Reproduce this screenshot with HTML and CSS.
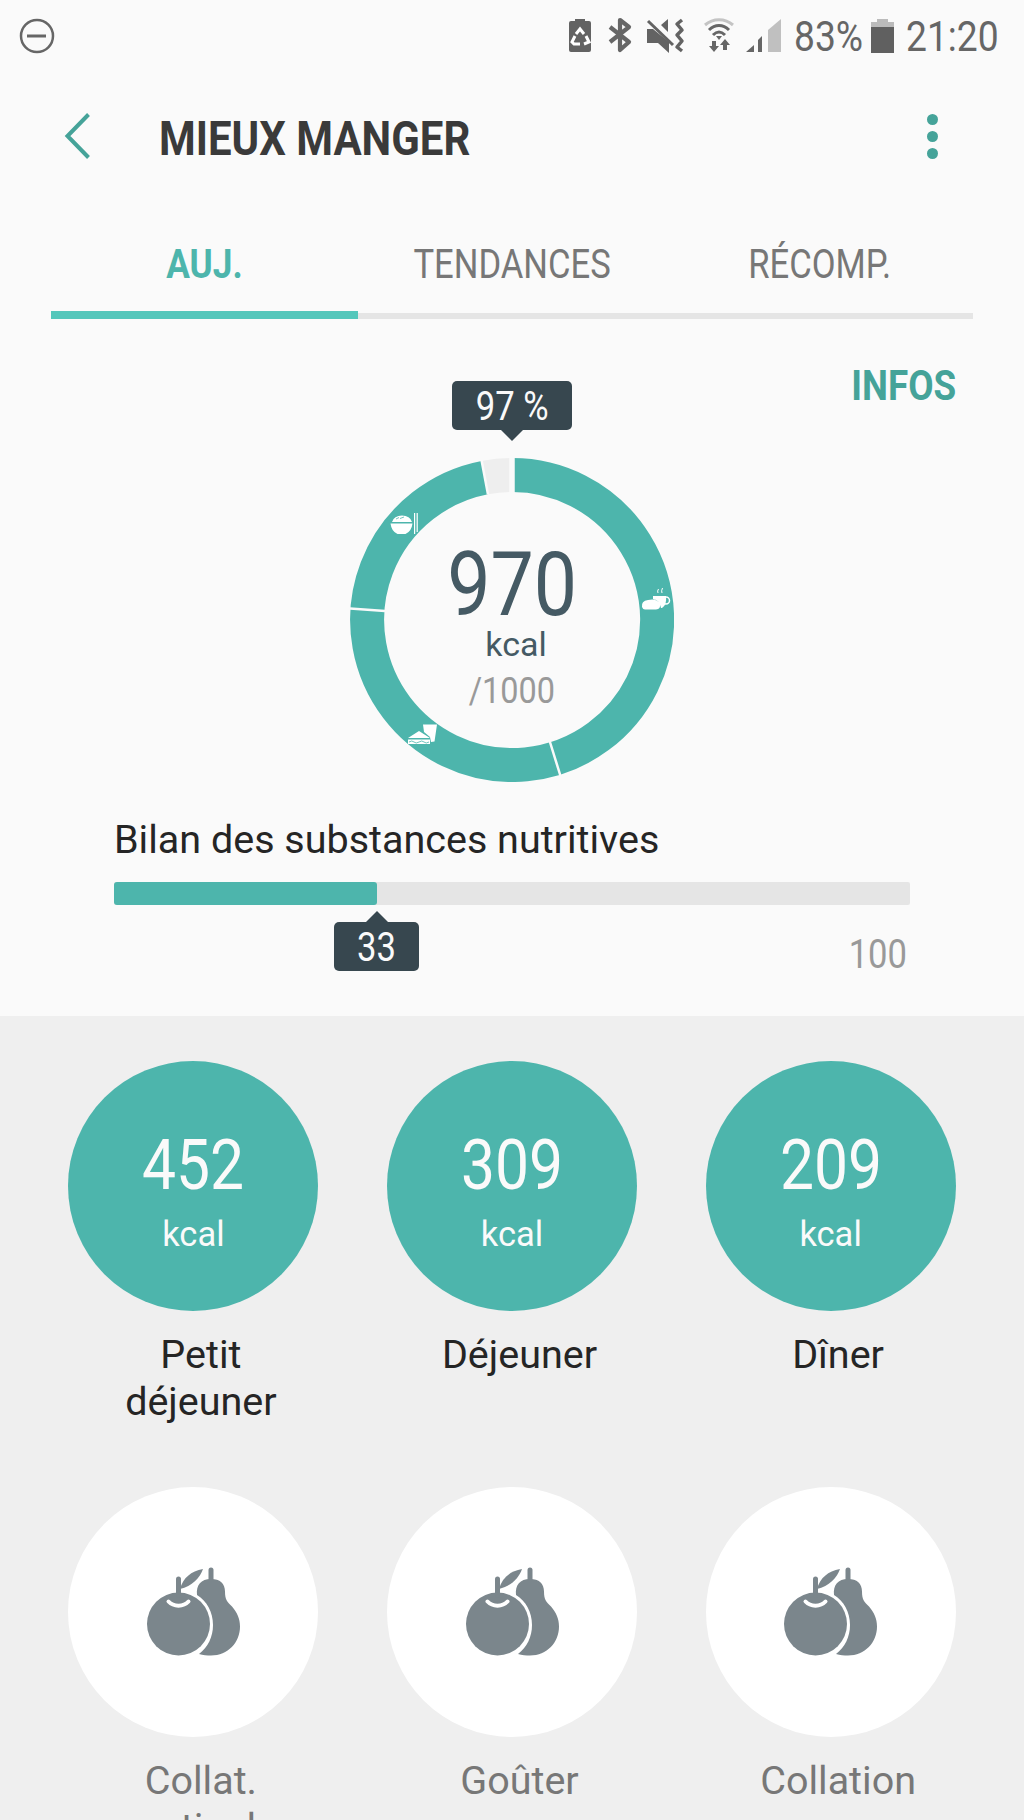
FILE: index.html
```html
<!DOCTYPE html>
<html lang="fr">
  <head>
    <meta charset="utf-8">
    <title>Mieux manger</title>
    <link rel="stylesheet" href="styles.css">
  </head>
  <body>
    <!-- reusable icon for the snack circles -->
    <svg class="defs" width="0" height="0">
      <symbol id="fruits" viewBox="0 0 96 90">
        <path d="M66 4v12" stroke="#7b868c" stroke-width="5" stroke-linecap="round"/>
        <path d="M66 13c-10 0-15 6-14 16 10 6 16 17 16 30 0 12-5 22-14 29 4 1.500 8 1.500 12 1.500 17 0 29-13 29-29 0-8-3-14-8-20-5-5-7-7-7-15 0-8-5-12.500-14-12.500z" fill="#7b868c"/>
        <circle cx="33.500" cy="58" r="31.500" fill="#7b868c"/>
        <path d="M33.500 13v16" stroke="#7b868c" stroke-width="5" stroke-linecap="round"/>
        <path d="M35 23C38 12 46 5 58 3 55 12 47 20 35 23z" fill="#7b868c"/>
        <path d="M23.500 35.500c5 5.500 15 5.500 20 0" fill="none" stroke="#fff" stroke-width="4" stroke-linecap="round"/>
      </symbol>
    </svg>

    <div class="status-bar">
      <svg class="dnd" width="36" height="36" viewBox="0 0 36 36" fill="none" stroke="#666">
        <circle cx="18" cy="18" r="16" stroke-width="2.500"/>
        <path d="M8 18h19" stroke-width="3"/>
      </svg>
      <svg class="status-icons" width="214" height="40" viewBox="0 0 214 40">
        <!-- power saving -->
        <path d="M1 7q0-2 2-2h4V3h10v2h4q2 0 2 2v27q0 2-2 2H3q-2 0-2-2z" fill="#636363"/>
        <g fill="none" stroke="#fff" stroke-width="3">
          <path d="M8 18l4-5 4 5M18 20l3 6-5 2M12 28H6l-2-2 3-6"/>
        </g>
        <!-- bluetooth -->
        <path d="M42 11l19 15-9 8V4l9 7-19 15" fill="none" stroke="#666" stroke-width="4.200" stroke-linejoin="round"/>
        <!-- muted, vibrating -->
        <path d="M79 13h6l16 13v11l-11-10H79zM93 9l7-6v13z" fill="#636363"/>
        <path d="M80 5l25 24" stroke="#636363" stroke-width="3"/>
        <path d="M114 4l-5 4 5 6-5 5 5 6-5 6 5 4" fill="none" stroke="#636363" stroke-width="3.500" stroke-linejoin="round"/>
        <!-- wifi -->
        <g fill="none" stroke="#666" stroke-width="3">
          <path d="M137 9c8-7 20-7 28 0" stroke="#c4c4c4"/>
          <path d="M141 14c6-6 14-6 20 0"/>
          <path d="M145 19c4-4 8-4 12 0"/>
        </g>
        <path d="M148 20h6l-3 4z" fill="#666"/>
        <path d="M144 25h4v5h3l-5 6-5-6h3zM155 34h4v-5h3l-5-6-5 6h3z" fill="#666"/>
        <!-- signal -->
        <path d="M178 36l8-7v7zM190 24l4-4v16h-4z" fill="#666"/>
        <path d="M200 14l13-11v33h-13z" fill="#c0c0c0"/>
      </svg>
      <span class="status-text battery-level">83%</span>
      <svg class="battery" width="23" height="36" viewBox="0 0 23 36">
        <path d="M0 4h6V1h11v3h6v5H0z" fill="#bbb"/>
        <path d="M0 9h23v26H0z" fill="#606060"/>
      </svg>
      <span class="status-text clock">21:20</span>
    </div>

    <div class="header">
      <svg class="back" width="26" height="46" viewBox="0 0 26 46">
        <path d="M24.500 1.500L3.500 23l21 21.500" fill="none" stroke="#45a399" stroke-width="4"/>
      </svg>
      <h1 class="title">MIEUX MANGER</h1>
      <div class="menu">
        <i></i><i></i><i></i>
      </div>
    </div>

    <div class="tabs">
      <div class="tab active"><span>AUJ.</span></div>
      <div class="tab"><span>TENDANCES</span></div>
      <div class="tab"><span>RÉCOMP.</span></div>
    </div>

    <div class="summary">
      <div class="summary-top">
        <div class="chart">
          <div class="tip tip-down"><span>97 %</span></div>
          <div class="ring">
            <svg class="ring-svg" width="324" height="324" viewBox="0 0 324 324">
              <path d="M162 17A145 145 0 1 1 134.800 19.600" fill="none" stroke="#4db5ac" stroke-width="34"/>
              <path d="M134.800 19.600A145 145 0 0 1 162 17" fill="none" stroke="#eee" stroke-width="34"/>
              <g stroke="#fafafa" stroke-width="2.500">
                <path d="M199.800 283.500L210.500 318M35 153L0 150.500M138 36.500L131.500 2"/>
                <path d="M162 0v36" stroke-width="5.500"/>
              </g>
              <!-- breakfast -->
              <g fill="#fff">
                <path d="M292 149q-1-6 6-7 9-2 12 4 1 5-4 5.500h-11q-2 0-3-2.500zM303 138h13q1 9-4 12h-1q-1-8-8-9z"/>
                <circle cx="316" cy="142.500" r="3.500" fill="none" stroke="#fff" stroke-width="1.500"/>
                <path d="M308 135q-1-2 .5-4M312 135q-1-2 .5-5" fill="none" stroke="#fff"/>
              </g>
              <!-- lunch -->
              <g fill="#fff">
                <path d="M73 266.500h14l-2.500 17-3.500.5-1-5-6-5zM58 280l11-7 11 7z"/>
                <path d="M58 281.500h22v4.500H58z"/>
                <path d="M59 284q3-2 5 0t5 0 5 0 5 0" fill="none" stroke="#4db5ac" stroke-width=".8"/>
              </g>
              <!-- dinner -->
              <g fill="#fff">
                <path d="M42 64q2-6.500 10-6.500T62 64zM40.500 65.500h22q-1 8-7 10.500h-8q-6-2.500-7-10.500z"/>
                <path d="M64 55h1.200v21H64zM66.600 55h1.200v19h-1.200z"/>
                <path d="M46 61l3-1.500M50 60.500l4-1.500" stroke="#4db5ac" stroke-width=".8"/>
              </g>
            </svg>
            <div class="ring-text">
              <div class="total">970</div>
              <div class="total-unit">kcal</div>
              <div class="goal">/1000</div>
            </div>
          </div>
        </div>
        <div class="infos"><span>INFOS</span></div>
      </div>

      <div class="nutrients">
        <h2 class="nutrients-title">Bilan des substances nutritives</h2>
        <div class="bar"><div class="bar-fill" style="width: 33%"></div></div>
        <div class="bar-legend">
          <div class="tip tip-up"><span>33</span></div>
          <span class="bar-max">100</span>
        </div>
      </div>
    </div>

    <div class="meals">
      <div class="meal">
        <div class="circle"><div class="kcal">452</div><div class="unit">kcal</div></div>
        <div class="meal-name">Petit<br>déjeuner</div>
      </div>
      <div class="meal">
        <div class="circle"><div class="kcal">309</div><div class="unit">kcal</div></div>
        <div class="meal-name">Déjeuner</div>
      </div>
      <div class="meal">
        <div class="circle"><div class="kcal">209</div><div class="unit">kcal</div></div>
        <div class="meal-name">Dîner</div>
      </div>
      <div class="meal empty">
        <div class="circle"><svg class="fruits"><use href="#fruits"/></svg></div>
        <div class="meal-name">Collat.<br>matinale</div>
      </div>
      <div class="meal empty">
        <div class="circle"><svg class="fruits"><use href="#fruits"/></svg></div>
        <div class="meal-name">Goûter</div>
      </div>
      <div class="meal empty">
        <div class="circle"><svg class="fruits"><use href="#fruits"/></svg></div>
        <div class="meal-name">Collation</div>
      </div>
    </div>
  </body>
</html>
```
FILE: styles.css
```css
* {
  box-sizing: border-box;
}

body {
  margin: 0;
  height: 1820px;
  overflow: hidden;
  background: #fafafa;
  font-family: Roboto, sans-serif;
  color: #252525;
}

svg {
  display: block;
}

svg.defs {
  position: absolute;
}

/* narrow lettering */
.status-text,
.title,
.tab span,
.infos span,
.tip span,
.total,
.goal,
.bar-max,
.kcal {
  display: inline-block;
  white-space: nowrap;
  transform: scaleX(0.865);
}

.status-bar {
  display: flex;
  align-items: center;
  height: 72px;
  padding-left: 19px;
}

.status-icons {
  margin-left: 513px;
}

.status-text {
  font-size: 43px;
  line-height: 73px;
  color: #666;
  transform-origin: left;
}

.battery-level {
  width: 78px;
  margin-left: 12px;
}

.battery {
  margin-left: -1px;
}

.clock {
  margin-left: 12px;
}

.header {
  display: flex;
  align-items: center;
  height: 132px;
  padding: 0 86px 0 64px;
}

.back {
  margin-bottom: 4px;
}

.title {
  margin: 0 auto 0 69px;
  font-size: 48.5px;
  font-weight: 700;
  color: #3a3a3a;
  transform-origin: left;
}

.menu i {
  display: block;
  width: 11px;
  height: 11px;
  margin: 0 0 6.300px;
  border-radius: 50%;
  background: #45a399;
}

.menu i:last-child {
  margin-bottom: 3px;
}

.tabs {
  display: flex;
  align-items: flex-end;
  height: 115px;
  margin: 0 51px;
}

.tab {
  flex: 1;
  height: 115px;
  border-bottom: 6px solid #e5e5e5;
  font-size: 40px;
  line-height: 121px;
  text-align: center;
  color: #777;
}

.tab.active {
  border-bottom: 8px solid #54c7bb;
  font-weight: 700;
  color: #4db5ac;
}

.active span {
  transform: scaleX(0.88);
}

.summary {
  height: 697px;
}

.summary-top {
  display: grid;
  grid-template-columns: 1fr 324px 1fr;
}

.chart {
  grid-column: 2;
  padding-top: 62px;
}

.infos {
  padding: 37px 68px 0 0;
  text-align: right;
  font-size: 42.5px;
  font-weight: 700;
  line-height: 60px;
  color: #45a399;
}

.infos span {
  transform-origin: right;
}

.tip {
  position: relative;
  height: 49px;
  border-radius: 5px;
  background: #37474f;
  color: #fafafa;
  font-size: 40px;
  line-height: 51px;
  text-align: center;
}

.tip::after {
  content: "";
  position: absolute;
  left: 50%;
  margin-left: -12px;
  border: 12px solid transparent;
}

.tip-down {
  width: 120px;
  margin: 0 auto 28px;
}

.tip-down::after {
  top: 48px;
  border-top-color: #37474f;
  border-bottom: 0;
}

.ring {
  display: grid;
  height: 324px;
}

.ring-svg,
.ring-text {
  grid-area: 1 / 1;
}

.ring-text {
  display: flex;
  flex-direction: column;
  align-items: center;
  padding-top: 86px;
}

.total {
  font-size: 89px;
  line-height: 82px;
  color: #455a64;
}

.total-unit {
  margin: -2px 0 0 8px;
  font-size: 34px;
  line-height: 40px;
  color: #455a64;
}

.goal {
  margin-top: 2px;
  font-size: 37.5px;
  line-height: 48px;
  color: #999;
}

.nutrients {
  width: 796px;
  margin: 35px auto 0;
}

.nutrients-title {
  margin: 0 0 18.500px;
  font-size: 39.5px;
  font-weight: 400;
  line-height: 46px;
}

.bar {
  height: 23px;
  border-radius: 2px;
  background: #e5e5e5;
}

.bar-fill {
  height: 23px;
  border-radius: 3px;
  background: #4db5ac;
}

.bar-legend {
  display: flex;
  justify-content: space-between;
  padding: 17px 0 0 220px;
}

.tip-up {
  width: 85px;
}

.tip-up::after {
  bottom: 48px;
  border-bottom-color: #37474f;
  border-top: 0;
}

.bar-max {
  padding: 9px 4px 0 0;
  font-size: 40px;
  line-height: 48px;
  color: #999;
  transform-origin: right;
}

.meals {
  display: grid;
  grid-template-columns: repeat(3, 250px);
  grid-auto-rows: 426px;
  justify-content: center;
  column-gap: 68.600px;
  height: 804px;
  padding-top: 45px;
  background: #efefef;
}

.circle {
  display: flex;
  flex-direction: column;
  align-items: center;
  height: 250px;
  border-radius: 50%;
  background: #4db5ac;
  color: #fafafa;
}

.kcal {
  margin-top: 63px;
  font-size: 70px;
  line-height: 82px;
}

.unit {
  margin-top: 8px;
  font-size: 34.5px;
  line-height: 40px;
}

.meal-name {
  padding: 21px 0 0 15px;
  font-size: 39.5px;
  line-height: 46.5px;
  text-align: center;
}

.empty .circle {
  background: #fff;
}

.empty .meal-name {
  color: #777;
}

.fruits {
  width: 96px;
  height: 90px;
  margin: 79px 1px 0 0;
}
```
